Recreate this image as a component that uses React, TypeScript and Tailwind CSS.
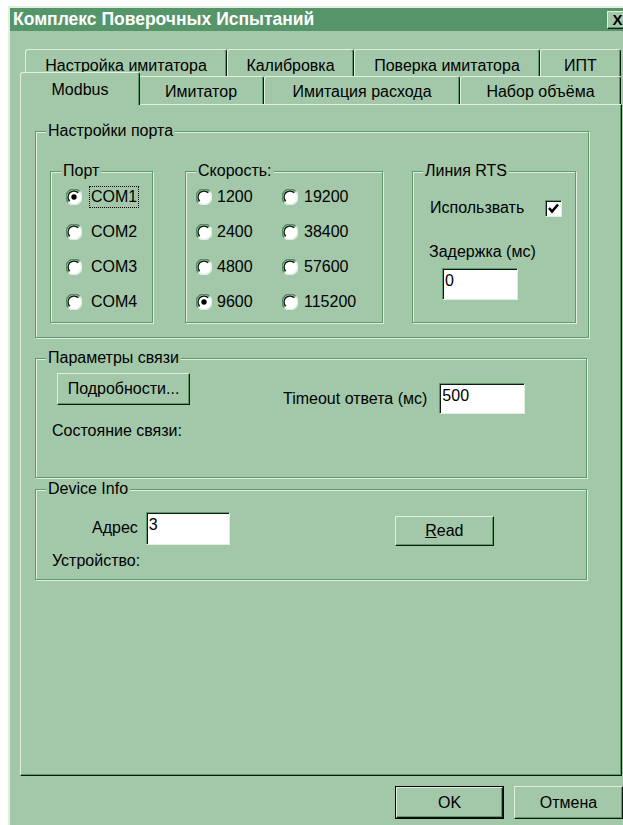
import type { ReactNode } from 'react';

function Raised({ children, className = '' }: { children: ReactNode; className?: string }) {
  return (
    <div
      className={`flex items-center justify-center border border-t-[#e2efdf] border-l-[#e2efdf] border-r-[#0d1a10] border-b-[#0d1a10] bg-[#a3c8a9] shadow-[inset_-1px_-1px_0_#5d9a6a] ${className}`}
    >
      {children}
    </div>
  );
}

function Sunken({ value, className = '' }: { value: string; className?: string }) {
  return (
    <div
      className={`border border-t-[#5d9a6a] border-l-[#5d9a6a] border-r-[#e2efdf] border-b-[#e2efdf] bg-white pl-[2px] pt-[4px] shadow-[inset_1px_1px_0_#0d1a10] ${className}`}
    >
      {value}
    </div>
  );
}

function Group({ label, className = '', children }: { label: string; className?: string; children?: ReactNode }) {
  return (
    <div
      className={`relative border border-[#5d9a6a] shadow-[inset_1px_1px_0_#e2efdf,1px_1px_0_#e2efdf] ${className}`}
    >
      <span className="absolute -top-[9px] left-[10px] bg-[#a3c8a9] px-[2px]">{label}</span>
      {children}
    </div>
  );
}

// sunken round radio mark, dark arc on top-left, light arc bottom-right
function RadioMark({ checked }: { checked?: boolean }) {
  return (
    <svg width="16" height="16" viewBox="0 0 12 12" className="shrink-0">
      <circle cx="6" cy="6" r="5.5" fill="#fff" />
      <path d="M10.2 1.8 A5.9 5.9 0 0 0 1.8 10.2" stroke="#4f8a5c" strokeWidth="1.1" fill="none" />
      <path d="M9.2 2.8 A4.5 4.5 0 0 0 2.8 9.2" stroke="#0d1a10" strokeWidth="1.1" fill="none" />
      <path d="M1.8 10.2 A5.9 5.9 0 0 0 10.2 1.8" stroke="#e2efdf" strokeWidth="1.1" fill="none" />
      {checked && <circle cx="6" cy="6" r="2" fill="#000" />}
    </svg>
  );
}

function Radio({ label, checked, focused, gap }: { label: string; checked?: boolean; focused?: boolean; gap: string }) {
  return (
    <div className="flex h-[35px] items-center">
      <RadioMark checked={checked} />
      <span
        className={`${gap} border px-[1px] py-[2px] ${focused ? 'border-dotted border-black' : 'border-transparent'}`}
      >
        {label}
      </span>
    </div>
  );
}

function Tab({ label, className = '', active }: { label: string; className?: string; active?: boolean }) {
  return (
    <div
      className={`flex justify-center rounded-t-[3px] border-l border-t border-r border-l-[#e2efdf] border-t-[#e2efdf] border-r-[#0d1a10] bg-[#a3c8a9] shadow-[inset_-1px_0_0_#5d9a6a] ${
        active ? 'relative z-10 -mx-[2px] -mb-[1px] h-[33px] pt-[9px]' : 'h-[28px] pt-[7px]'
      } ${className}`}
    >
      {label}
    </div>
  );
}

export default function App() {
  const ports = ['COM1', 'COM2', 'COM3', 'COM4'];
  const speeds = [
    ['1200', '19200'],
    ['2400', '38400'],
    ['4800', '57600'],
    ['9600', '115200'],
  ];

  return (
    <div className="h-[825px] w-[623px] overflow-hidden bg-white font-['Liberation_Sans',Arial,sans-serif] text-[16px] leading-none text-black">
      <div className="ml-[8px] mt-[6px] h-[830px] w-[640px] border-l-2 border-t-2 border-[#e2efdf] bg-[#a3c8a9]">
        {/* Title bar */}
        <div className="flex h-[23px] items-center justify-between bg-[#56956a] pl-[3px] pr-[23px]">
          <span className="text-[17.5px] font-bold text-white">Комплекс Поверочных Испытаний</span>
          <Raised className="h-[18px] w-[18px] pl-[3px] text-[15px] font-bold">X</Raised>
        </div>

        <div className="pl-[10px] pt-[18px]">
          {/* Back row of tabs */}
          <div className="ml-[5px] flex h-[27px] items-start">
            <Tab label="Настройка имитатора" className="w-[202px] !h-[27px] !pt-[8px]" />
            <Tab label="Калибровка" className="w-[127px] !h-[27px] !pt-[8px]" />
            <Tab label="Поверка имитатора" className="w-[186px] !h-[27px] !pt-[8px]" />
            <Tab label="ИПТ" className="w-[81px] !h-[27px] !pt-[8px]" />
          </div>

          {/* Front row of tabs */}
          <div className="ml-[2px] flex h-[28px] items-end">
            <Tab label="Modbus" className="w-[120px]" active />
            <Tab label="Имитатор" className="w-[126px]" />
            <Tab label="Имитация расхода" className="w-[196px]" />
            <Tab label="Набор объёма" className="w-[161px]" />
          </div>

          {/* Tab page */}
          <div className="h-[672px] w-[602px] border border-t-[#e2efdf] border-l-[#e2efdf] border-r-[#0d1a10] border-b-[#0d1a10] pl-[14px] pt-[26px] shadow-[inset_-1px_-1px_0_#5d9a6a]">
            <Group label="Настройки порта" className="h-[207px] w-[554px]">
              <div className="flex pl-[14px] pt-[39px]">
                <Group label="Порт" className="h-[152px] w-[103px]">
                  <div className="pl-[15px] pt-[7px]">
                    {ports.map((p, i) => (
                      <Radio key={p} label={p} checked={i === 0} focused={i === 0} gap="ml-[7px]" />
                    ))}
                  </div>
                </Group>

                <Group label="Скорость:" className="ml-[32px] h-[152px] w-[198px]">
                  <div className="grid grid-cols-[86px_1fr] pl-[10px] pt-[7px]">
                    {speeds.map(([a, b]) => [
                      <Radio key={a} label={a} checked={a === '9600'} gap="ml-[3px]" />,
                      <Radio key={b} label={b} gap="ml-[4px]" />,
                    ])}
                  </div>
                </Group>

                <Group label="Линия RTS" className="ml-[29px] h-[152px] w-[164px]">
                  <div className="mt-[27px] flex h-[18px] items-center justify-between pl-[17px] pr-[13px]">
                    <span>Использвать</span>
                    <div className="flex h-[17px] w-[17px] items-center justify-center border border-t-[#5d9a6a] border-l-[#5d9a6a] border-r-[#e2efdf] border-b-[#e2efdf] bg-white shadow-[inset_1px_1px_0_#0d1a10]">
                      <svg width="13" height="13" viewBox="0 0 13 13">
                        <polyline points="2,6 5,9.5 11,2.5" fill="none" stroke="#000" strokeWidth="2.6" />
                      </svg>
                    </div>
                  </div>
                  <div className="ml-[16px] mt-[27px]">Задержка (мс)</div>
                  <Sunken value="0" className="ml-[29px] mt-[8px] h-[32px] w-[76px]" />
                </Group>
              </div>
            </Group>

            <Group label="Параметры связи" className="mt-[20px] h-[120px] w-[552px]">
              <div className="flex items-start">
                <Raised className="ml-[21px] mt-[14px] h-[32px] w-[133px]">Подробности...</Raised>
                <div className="ml-[93px] mt-[24px] flex items-center gap-[12px]">
                  <span>Timeout ответа (мс)</span>
                  <Sunken value="500" className="h-[31px] w-[86px]" />
                </div>
              </div>
              <div className="ml-[16px] mt-[9px]">Состояние связи:</div>
            </Group>

            <Group label="Device Info" className="mt-[11px] h-[91px] w-[552px]">
              <div className="flex items-start">
                <div className="ml-[56px] mt-[22px] flex items-center gap-[8px]">
                  <span className="-mt-[2px]">Адрес</span>
                  <Sunken value="3" className="h-[33px] w-[84px]" />
                </div>
                <Raised className="ml-[165px] mt-[26px] h-[30px] w-[99px]">
                  <span>
                    <span className="underline">R</span>ead
                  </span>
                </Raised>
              </div>
              <div className="ml-[16px] mt-[7px]">Устройство:</div>
            </Group>
          </div>

          {/* Dialog buttons */}
          <div className="ml-[375px] mt-[10px] flex gap-[10px]">
            <div className="h-[33px] w-[109px] border border-black">
              <Raised className="h-full w-full">OK</Raised>
            </div>
            <Raised className="h-[33px] w-[109px]">Отмена</Raised>
          </div>
        </div>
      </div>
    </div>
  );
}
